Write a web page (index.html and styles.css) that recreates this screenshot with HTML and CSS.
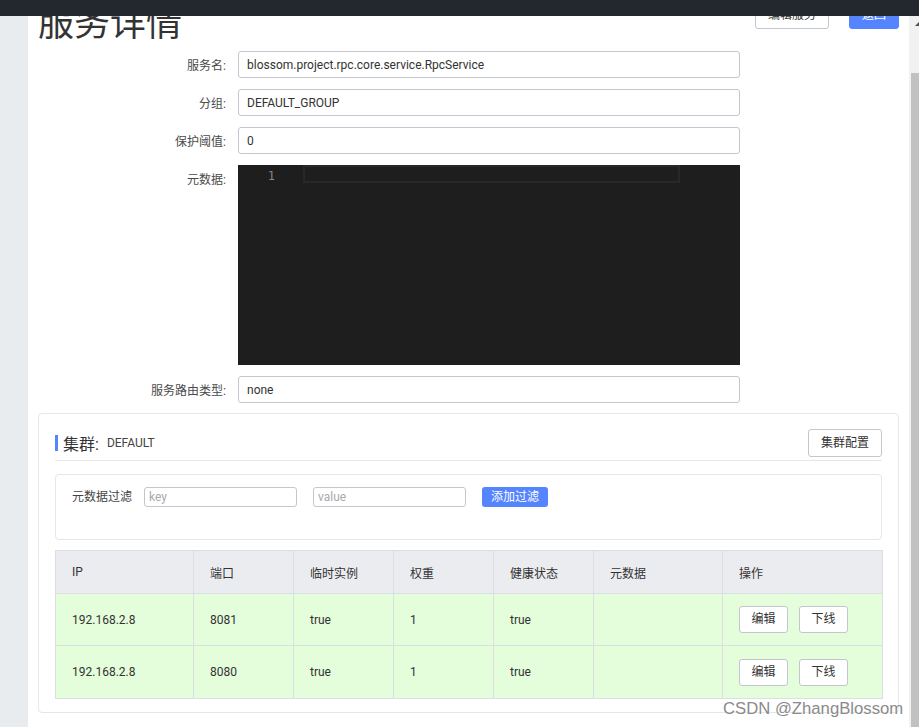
FILE: index.html
```html
<!DOCTYPE html>
<html lang="zh-CN">
<head>
<meta charset="utf-8">
<title>服务详情</title>
<link rel="stylesheet" href="styles.css">
</head>
<body>
<div class="topbar"></div>
<div class="layout">
  <aside class="side"></aside>
  <main class="main">
    <div class="title-row">
      <h1 class="title">服务详情</h1>
      <div class="actions">
        <button class="btn">编辑服务</button>
        <button class="btn primary">返回</button>
      </div>
    </div>
    <div class="form">
      <label class="label">服务名:</label>
      <div class="input">blossom.project.rpc.core.service.RpcService</div>
      <label class="label">分组:</label>
      <div class="input">DEFAULT_GROUP</div>
      <label class="label">保护阈值:</label>
      <div class="input">0</div>
      <label class="label label-top">元数据:</label>
      <div class="editor">
        <div class="gutter">1</div>
        <div class="cur-line"></div>
      </div>
      <label class="label">服务路由类型:</label>
      <div class="input">none</div>
    </div>
    <section class="card">
      <div class="card-head">
        <div class="card-title"><span class="bar"></span><span class="ct-main">集群:</span><span class="ct-sub">DEFAULT</span></div>
        <button class="btn">集群配置</button>
      </div>
      <div class="filter">
        <span class="filter-label">元数据过滤</span>
        <div class="small-input placeholder">key</div>
        <div class="small-input placeholder">value</div>
        <button class="btn-small">添加过滤</button>
      </div>
      <table class="table">
        <colgroup>
          <col style="width:138px"><col style="width:100px"><col style="width:100px"><col style="width:100px"><col style="width:100px"><col style="width:129px"><col style="width:160px">
        </colgroup>
        <thead>
          <tr><th>IP</th><th>端口</th><th>临时实例</th><th>权重</th><th>健康状态</th><th>元数据</th><th>操作</th></tr>
        </thead>
        <tbody>
          <tr class="r1"><td>192.168.2.8</td><td>8081</td><td>true</td><td>1</td><td>true</td><td></td><td><div class="ops"><button class="btn op">编辑</button><button class="btn op">下线</button></div></td></tr>
          <tr class="r2"><td>192.168.2.8</td><td>8080</td><td>true</td><td>1</td><td>true</td><td></td><td><div class="ops"><button class="btn op">编辑</button><button class="btn op">下线</button></div></td></tr>
        </tbody>
      </table>
    </section>
  </main>
  <div class="scrollbar">
    <div class="sb-arrow"></div>
    <div class="sb-thumb"></div>
  </div>
</div>
<div class="watermark">CSDN @ZhangBlossom</div>
</body>
</html>
```
FILE: styles.css
```css
* { box-sizing: border-box; }
html, body { margin: 0; padding: 0; }
body {
  font-family: Roboto, "Noto Sans CJK SC", sans-serif;
  font-size: 12px;
  color: #333;
  background: #fff;
  height: 727px;
  overflow: hidden;
  position: relative;
}
.topbar {
  position: fixed;
  top: 0; left: 0; right: 0;
  height: 16px;
  background: #23272e;
  z-index: 10;
}
.layout {
  display: flex;
  height: 727px;
}
.side {
  width: 28px;
  flex: none;
  background: #e9ecef;
}
.main {
  flex: 1;
  padding: 0 10px;
  background: #fff;
  min-width: 0;
}
.title-row {
  display: flex;
  justify-content: space-between;
  align-items: flex-start;
  height: 39px;
}
.title {
  margin: 6px 0 0;
  font-size: 36px;
  line-height: 36px;
  font-weight: normal;
  color: #333;
}
.actions {
  display: flex;
  gap: 20px;
  margin-top: 1px;
}
.btn {
  height: 28px;
  padding: 0 12px;
  border: 1px solid #c4c6cf;
  border-radius: 3px;
  background: #fff;
  color: #333;
  font-family: inherit;
  font-size: 12px;
  line-height: 26px;
}
.btn.primary {
  background: #5584ff;
  border-color: #5584ff;
  color: #fff;
}
.form {
  display: grid;
  grid-template-columns: 188px 502px;
  column-gap: 12px;
  row-gap: 11px;
  margin-top: 12px;
}
.label {
  text-align: right;
  height: 27px;
  padding-top: 2px;
  line-height: 27px;
  color: #4a4a4a;
}
.label-top { align-self: start; }
.input {
  height: 27px;
  border: 1px solid #c4c6cf;
  border-radius: 3px;
  padding: 1px 8px 0;
  line-height: 25px;
  color: #333;
}
.editor {
  height: 200px;
  background: #1e1e1e;
  display: flex;
  align-items: flex-start;
}
.gutter {
  width: 37px;
  text-align: right;
  color: #858585;
  font-family: "DejaVu Sans Mono", monospace;
  font-size: 12px;
  line-height: 18px;
  padding-top: 2px;
  flex: none;
}
.cur-line {
  margin-left: 28px;
  width: 377px;
  height: 18px;
  border: 2px solid #282828;
}
.card {
  margin-top: 10px;
  border: 1px solid #e6e6e6;
  border-radius: 4px;
  padding: 15px 16px 13px;
}
.card-head {
  display: flex;
  justify-content: space-between;
  align-items: center;
  padding-bottom: 3px;
  border-bottom: 1px solid #e6e6e6;
}
.card-title {
  display: flex;
  align-items: center;
}
.bar {
  width: 3px;
  height: 16px;
  background: #5584ff;
  margin-right: 5px;
}
.ct-main { font-size: 16px; color: #333; margin-right: 8px; }
.ct-sub { font-size: 12px; color: #444; }
.filter {
  margin-top: 13px;
  height: 66px;
  border: 1px solid #e6e6e6;
  border-radius: 4px;
  padding: 12px 16px;
  display: flex;
  align-items: flex-start;
}
.filter-label {
  line-height: 20px;
  color: #444;
  width: 60px;
  margin-right: 12px;
}
.small-input {
  width: 153px;
  height: 20px;
  border: 1px solid #c4c6cf;
  border-radius: 3px;
  padding: 0 4px;
  line-height: 18px;
  margin-right: 16px;
}
.placeholder { color: #aaa; }
.btn-small {
  width: 66px;
  height: 20px;
  border: none;
  border-radius: 3px;
  background: #5584ff;
  color: #fff;
  font-family: inherit;
  font-size: 12px;
  padding: 0;
  line-height: 20px;
}
.table {
  margin-top: 10px;
  width: 100%;
  border-collapse: collapse;
  table-layout: fixed;
}
.table th, .table td {
  border: 1px solid #dcdee3;
  text-align: left;
  padding: 0 16px;
  font-weight: normal;
  color: #333;
  font-size: 12px;
}
.table th {
  background: #ebecf0;
  height: 43px;
}
.table td { background: #e4fdda; }
.r1 td { height: 52px; }
.r2 td { height: 53px; }
.ops { display: flex; gap: 11px; }
.btn.op {
  width: 49px;
  height: 27px;
  padding: 0;
  line-height: 25px;
}
.scrollbar {
  width: 10px;
  flex: none;
  background: #f1f1f1;
  display: flex;
  flex-direction: column;
  padding-top: 16px;
}
.sb-arrow {
  height: 57px;
  position: relative;
}
.sb-arrow::after {
  content: "";
  position: absolute;
  left: 6px;
  top: 6px;
  border-left: 4px solid transparent;
  border-right: 4px solid transparent;
  border-bottom: 4px solid #505050;
}
.sb-thumb {
  flex: 1;
  margin-left: 2px;
  background: #c1c1c1;
}
.watermark {
  position: absolute;
  left: 723px;
  top: 699px;
  font-family: "Liberation Sans", Arial, sans-serif;
  font-size: 16.7px;
  color: #8a8a8a;
  text-shadow: 0 0 2px #fff;
  z-index: 5;
}
```
